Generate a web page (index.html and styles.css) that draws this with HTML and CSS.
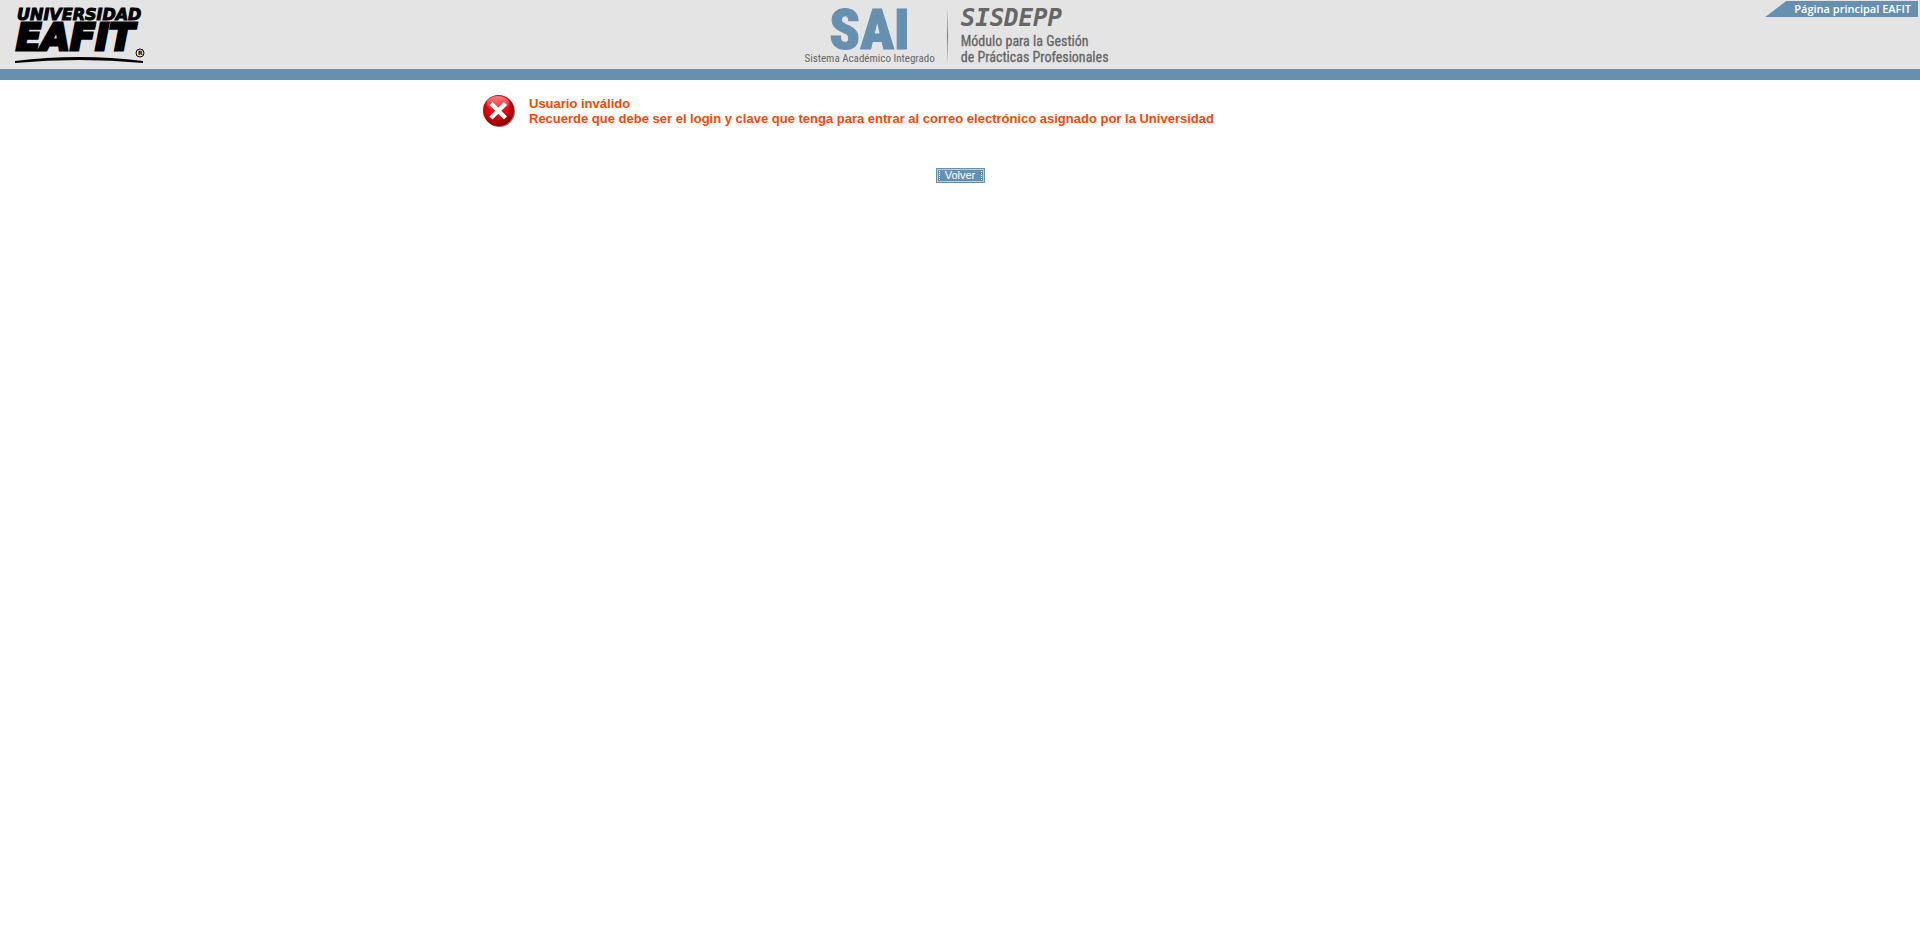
FILE: index.html
```html
<!DOCTYPE html>
<html lang="es">
<head>
<meta charset="utf-8">
<title>SISDEPP - Universidad EAFIT</title>
<link rel="stylesheet" href="styles.css">
</head>
<body>
<header class="header">
  <div class="logo">
    <svg width="136" height="60" viewBox="0 0 136 60" role="img" aria-label="Universidad EAFIT">
      <text class="logo-small" x="5" y="16">UNIVERSIDAD</text>
      <text class="logo-big" x="4" y="46">EAFIT</text>
      <path d="M3 57Q67 49 131 57V59Q67 53 3 59Z"/>
      <circle cx="128" cy="49" r="4" fill="#e4e4e4" stroke="#000"/>
      <text class="logo-mark" x="126" y="51">R</text>
    </svg>
  </div>
  <div class="brand">
    <div class="sai">
      <span class="sai-name">SAI</span>
      <span class="sai-label">Sistema Académico Integrado</span>
    </div>
    <span class="divider"></span>
    <div class="module">
      <span class="module-name">SISDEPP</span>
      <span class="module-label">Módulo para la Gestión<br>de Prácticas Profesionales</span>
    </div>
  </div>
  <a class="home-link" href="#">Página principal EAFIT</a>
</header>
<main class="content">
  <div class="message" role="alert">
    <svg width="34" height="34" viewBox="0 0 34 34" aria-hidden="true">
      <defs>
        <radialGradient id="ball" cx="45%" cy="35%" r="68%">
          <stop offset="0" stop-color="#ff2020"/>
          <stop offset=".55" stop-color="#e00008"/>
          <stop offset="1" stop-color="#780000"/>
        </radialGradient>
        <linearGradient id="shine" x1="0" y1="0" x2="0" y2="1">
          <stop offset="0" stop-color="#fff" stop-opacity=".5"/>
          <stop offset="1" stop-color="#fff" stop-opacity="0"/>
        </linearGradient>
      </defs>
      <circle cx="16.500" cy="16.500" r="15.500" fill="#222" opacity=".6"/>
      <circle cx="15.500" cy="15.500" r="15.500" fill="url(#ball)"/>
      <ellipse cx="15" cy="8.500" rx="11.500" ry="7.500" fill="url(#shine)"/>
      <path d="M8 8.500L22.500 23M22.500 8.500L8 23" stroke="#fff" stroke-width="4.500"/>
    </svg>
    <p class="message-text">Usuario inválido<br>Recuerde que debe ser el login y clave que tenga para entrar al correo electrónico asignado por la Universidad</p>
  </div>
  <button class="back" type="button">Volver</button>
</main>
</body>
</html>
```
FILE: styles.css
```css
body {
  margin: 0;
  background: #fff;
  font-family: "Liberation Sans", Arial, sans-serif;
}

.header {
  display: grid;
  grid-template-columns: 1fr auto 1fr;
  align-items: start;
  min-height: 69px;
  background: #e4e4e4;
  border-bottom: 11px solid #6690b0;
}

.logo {
  padding: 4px 0 0 12px;
}

.logo svg,
.message svg {
  display: block;
  flex: none;
}

.logo text {
  font-family: "DejaVu Sans", sans-serif;
  font-weight: bold;
  font-style: italic;
  stroke: #000;
}

.logo .logo-small {
  font-size: 16px;
  stroke-width: 1px;
}

.logo .logo-big {
  font-size: 37px;
  stroke-width: 3px;
}

.logo .logo-mark {
  font-size: 6px;
  font-style: normal;
  stroke: none;
}

.brand {
  display: flex;
  align-items: flex-start;
  padding-right: 7px;
  font-family: "Roboto Condensed", Lato, sans-serif;
  color: #666;
}

.sai {
  display: flex;
  flex-direction: column;
  align-items: center;
}

.sai-name {
  padding-top: 8px;
  font-size: 56px;
  line-height: 44px;
  font-weight: 900;
  color: #6690b0;
  -webkit-text-stroke: 1px #6690b0;
}

.sai-label {
  font-size: 11px;
  line-height: 13px;
}

.divider {
  width: 1px;
  height: 56px;
  margin: 8px 13px 0 12px;
  background: linear-gradient(#e4e4e4, #3f86b8 50%, #e4e4e4);
}

.module {
  display: flex;
  flex-direction: column;
}

.module-name {
  padding-top: 4px;
  font-family: "DejaVu Sans Mono", monospace;
  font-size: 24px;
  line-height: 29px;
  font-weight: bold;
  font-style: italic;
}

.module-label {
  font-size: 14px;
  line-height: 16px;
  -webkit-text-stroke: 0.3px #666;
}

.home-link {
  justify-self: end;
  margin: 1px 2px 0 0;
  padding: 0 7px 0 29px;
  background: #6690b0;
  clip-path: polygon(21px 0, 100% 0, 100% 100%, 0 100%);
  font-family: "Open Sans", sans-serif;
  font-size: 11px;
  line-height: 16px;
  font-weight: 600;
  color: #fff;
  text-decoration: none;
}

.content {
  display: flex;
  flex-direction: column;
  align-items: center;
  padding-top: 15px;
}

.message {
  display: flex;
  gap: 12px;
  box-sizing: border-box;
  width: 50%;
  padding-left: 3px;
}

.message-text {
  margin: 1px 0 0;
  font-size: 13px;
  line-height: 15px;
  font-weight: bold;
  color: #ff4500;
}

.back {
  box-sizing: border-box;
  height: 15px;
  margin: 39px 0 0;
  padding: 0;
  width: 49px;
  border: 1px solid #6690b0;
  outline: 1px solid #b4d0e0;
  outline-offset: -2px;
  background:
    repeating-linear-gradient(#fff 0 1px, transparent 1px 2px) 2px 2px / 1px 9px no-repeat,
    repeating-linear-gradient(#fff 0 1px, transparent 1px 2px) 44px 2px / 1px 9px no-repeat,
    #6690b0;
  font-family: "Liberation Sans", Arial, sans-serif;
  font-size: 11px;
  line-height: 13px;
  color: #fff;
}
```
